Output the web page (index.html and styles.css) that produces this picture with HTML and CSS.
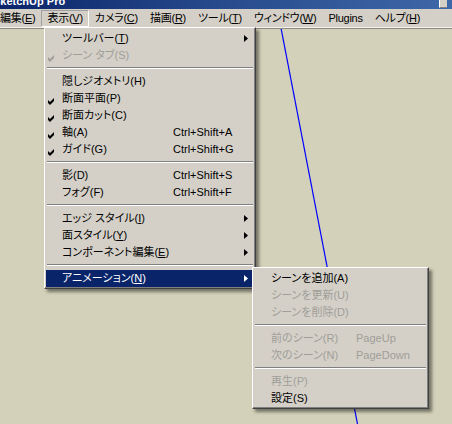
FILE: index.html
```html
<!DOCTYPE html>
<html lang="ja">
<head>
<meta charset="utf-8">
<title>SketchUp Pro</title>
<link rel="stylesheet" href="styles.css">
</head>
<body>
<div class="window">
  <div class="titlebar">
    <span class="title">SketchUp Pro</span>
    <span class="tbtn"></span>
  </div>
  <nav class="menubar">
    <span class="mb-item first">編集(<u>E</u>)</span>
    <span class="mb-item open">表示(<u>V</u>)</span>
    <span class="mb-item">カメラ(<u>C</u>)</span>
    <span class="mb-item">描画(<u>R</u>)</span>
    <span class="mb-item">ツール(<u>T</u>)</span>
    <span class="mb-item">ウィンドウ(<u>W</u>)</span>
    <span class="mb-item">Plugins</span>
    <span class="mb-item">ヘルプ(<u>H</u>)</span>
  </nav>
  <div class="edge"></div>
  <div class="canvas">
    <svg class="axis" width="452" height="395" viewBox="0 0 452 395"><line x1="281" y1="-1" x2="357.5" y2="395" stroke="#0000ff" stroke-width="1.2"/></svg>
  </div>

  <div class="menu main">
    <div class="mi"><span class="chk"></span><span class="lbl">ツールバー(<u>T</u>)</span><span class="sc"></span><svg class="arr" viewBox="0 0 4 7"><path d="M0 0 L4 3.5 L0 7 Z" fill="currentColor"/></svg></div>
    <div class="mi dis"><span class="chk"><svg class="ck" viewBox="0 0 7 7"><path d="M0 2 L2 4 L6 0 L6 3 L2 7 L0 5 Z" fill="currentColor"/></svg></span><span class="lbl">シーン タブ(S)</span></div>
    <div class="sep"></div>
    <div class="mi"><span class="chk"></span><span class="lbl">隠しジオメトリ(H)</span></div>
    <div class="mi"><span class="chk"><svg class="ck" viewBox="0 0 7 7"><path d="M0 2 L2 4 L6 0 L6 3 L2 7 L0 5 Z" fill="currentColor"/></svg></span><span class="lbl">断面平面(P)</span></div>
    <div class="mi"><span class="chk"><svg class="ck" viewBox="0 0 7 7"><path d="M0 2 L2 4 L6 0 L6 3 L2 7 L0 5 Z" fill="currentColor"/></svg></span><span class="lbl">断面カット(C)</span></div>
    <div class="mi"><span class="chk"><svg class="ck" viewBox="0 0 7 7"><path d="M0 2 L2 4 L6 0 L6 3 L2 7 L0 5 Z" fill="currentColor"/></svg></span><span class="lbl">軸(A)</span><span class="sc">Ctrl+Shift+A</span></div>
    <div class="mi"><span class="chk"><svg class="ck" viewBox="0 0 7 7"><path d="M0 2 L2 4 L6 0 L6 3 L2 7 L0 5 Z" fill="currentColor"/></svg></span><span class="lbl">ガイド(G)</span><span class="sc">Ctrl+Shift+G</span></div>
    <div class="sep"></div>
    <div class="mi"><span class="chk"></span><span class="lbl">影(D)</span><span class="sc">Ctrl+Shift+S</span></div>
    <div class="mi"><span class="chk"></span><span class="lbl">フォグ(F)</span><span class="sc">Ctrl+Shift+F</span></div>
    <div class="sep"></div>
    <div class="mi"><span class="chk"></span><span class="lbl">エッジ スタイル(<u>I</u>)</span><svg class="arr" viewBox="0 0 4 7"><path d="M0 0 L4 3.5 L0 7 Z" fill="currentColor"/></svg></div>
    <div class="mi"><span class="chk"></span><span class="lbl">面スタイル(<u>Y</u>)</span><svg class="arr" viewBox="0 0 4 7"><path d="M0 0 L4 3.5 L0 7 Z" fill="currentColor"/></svg></div>
    <div class="mi"><span class="chk"></span><span class="lbl">コンポーネント編集(<u>E</u>)</span><svg class="arr" viewBox="0 0 4 7"><path d="M0 0 L4 3.5 L0 7 Z" fill="currentColor"/></svg></div>
    <div class="sep"></div>
    <div class="mi hl"><span class="chk"></span><span class="lbl">アニメーション(<u>N</u>)</span><svg class="arr" viewBox="0 0 4 7"><path d="M0 0 L4 3.5 L0 7 Z" fill="currentColor"/></svg></div>
  </div>

  <div class="menu sub">
    <div class="mi"><span class="chk"></span><span class="lbl">シーンを追加(A)</span></div>
    <div class="mi dis"><span class="chk"></span><span class="lbl">シーンを更新(U)</span></div>
    <div class="mi dis"><span class="chk"></span><span class="lbl">シーンを削除(D)</span></div>
    <div class="sep"></div>
    <div class="mi dis"><span class="chk"></span><span class="lbl">前のシーン(R)</span><span class="sc">PageUp</span></div>
    <div class="mi dis"><span class="chk"></span><span class="lbl">次のシーン(N)</span><span class="sc">PageDown</span></div>
    <div class="sep"></div>
    <div class="mi dis"><span class="chk"></span><span class="lbl">再生(P)</span></div>
    <div class="mi"><span class="chk"></span><span class="lbl">設定(S)</span></div>
  </div>
</div>
</body>
</html>
```
FILE: styles.css
```css
* { box-sizing: border-box; margin: 0; padding: 0; }
html, body { width: 452px; height: 424px; overflow: hidden; }
body {
  font-family: "Liberation Sans", "Noto Sans CJK JP", sans-serif;
  font-size: 11px;
  font-feature-settings: "palt" 1;
  color: #000;
  background: #d3d1b9;
}
u { text-decoration: underline; text-underline-offset: 1px; }

.window {
  position: relative;
  width: 452px;
  height: 424px;
  display: flex;
  flex-direction: column;
  overflow: hidden;
}

.titlebar {
  height: 9px;
  flex: none;
  display: flex;
  align-items: flex-start;
  overflow: hidden;
  background: linear-gradient(90deg, #0a246a 0%, #25488a 45%, #3f68a8 100%);
}
.title {
  color: #fff;
  font-weight: bold;
  font-size: 11px;
  line-height: 11px;
  margin: -4px 0 0 -7px;
  white-space: nowrap;
}
.tbtn {
  margin-left: auto;
  margin-right: 5px;
  width: 8px;
  height: 8px;
  background: #d4d0c8;
  border-left: 1px solid #fff;
  border-bottom: 1px solid #808080;
}

.menubar {
  height: 18px;
  flex: none;
  display: flex;
  padding-top: 1px;
  background: #d4d0c8;
}
.mb-item {
  height: 17px;
  line-height: 15px;
  padding: 0 5px;
  border: 1px solid transparent;
  white-space: nowrap;
  letter-spacing: -0.25px;
}
.mb-item.first { margin-left: -6px; }
.mb-item.open { border-color: #a0a0a0 #ffffff #ffffff #a0a0a0; }

.edge {
  height: 2px;
  flex: none;
  border-top: 1px solid #f4f3ee;
  border-bottom: 1px solid #8c8a80;
}

.canvas {
  flex: 1;
  position: relative;
  background: #d3d1b9;
}
.axis { position: absolute; left: 0; top: 0; }

.menu {
  position: absolute;
  background: #d4d0c8;
  border: 1px solid;
  border-color: #ffffff #404040 #404040 #ffffff;
  padding: 2px 1px 1px 1px;
  box-shadow: inset -1px -1px 0 #808080, 3px 3px 3px rgba(0, 0, 0, 0.45);
}
.main { left: 44px; top: 27px; width: 212px; }
.sub { left: 252px; top: 267px; width: 177px; }

.mi {
  display: flex;
  align-items: center;
  height: 17px;
  line-height: 17px;
  white-space: nowrap;
}
.mi.dis { color: #a09e98; }
.mi.hl { background: #0a246a; color: #fff; }

.chk {
  width: 16px;
  height: 17px;
  flex: none;
  padding: 8px 0 0 2px;
}
.sub .chk { width: 17px; }
.ck { display: block; width: 7px; height: 7px; }

.lbl { width: 111px; flex: none; }
.sub .lbl { width: 85px; }
.sc { flex: none; }

.arr {
  margin-left: auto;
  margin-right: 6px;
  width: 4px;
  height: 7px;
  flex: none;
}

.sep {
  margin: 3px 1px 4px;
  border-top: 1px solid #808080;
  border-bottom: 1px solid #ffffff;
}
```
